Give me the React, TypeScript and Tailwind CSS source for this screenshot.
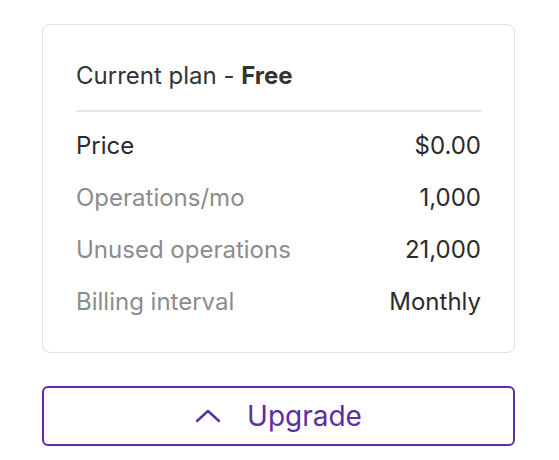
const rows = [
  { label: 'Price', value: '$0.00', strong: true },
  { label: 'Operations/mo', value: '1,000' },
  { label: 'Unused operations', value: '21,000' },
  { label: 'Billing interval', value: 'Monthly' },
];

export default function App() {
  return (
    <div className="min-h-screen bg-white pl-[42px] pt-[24px] font-['Inter',sans-serif]">
      <div className="w-[473px]">
        {/* Plan card */}
        <div className="rounded-lg border border-[#e2e2e2] px-[33px] pt-[35px] pb-[34px]">
          <div className="text-[24px] leading-[32px] text-[#333]">
            Current plan - <span className="font-bold">Free</span>
          </div>
          <div className="mt-[18px] mb-[18px] border-t-2 border-[#e4e4e4]" />
          <div className="flex flex-col gap-[20px]">
            {rows.map((row) => (
              <div key={row.label} className="flex items-center justify-between text-[24px] leading-[32px]">
                <span className={row.strong ? 'text-[#2b2b2b]' : 'text-[#8c8c8c]'}>{row.label}</span>
                <span className="text-[#2b2b2b]">{row.value}</span>
              </div>
            ))}
          </div>
        </div>

        {/* Upgrade button */}
        <button className="mt-[33px] flex h-[60px] w-full items-center justify-center gap-[26px] rounded-md border-2 border-[#5b2ea6] text-[28px] text-[#5b2ea6]">
          <svg width="26" height="16" viewBox="0 0 26 16" fill="none" stroke="currentColor" strokeWidth="2.4" strokeLinecap="round" strokeLinejoin="round">
            <polyline points="2,13 13,3 24,13" />
          </svg>
          Upgrade
        </button>
      </div>
    </div>
  );
}
